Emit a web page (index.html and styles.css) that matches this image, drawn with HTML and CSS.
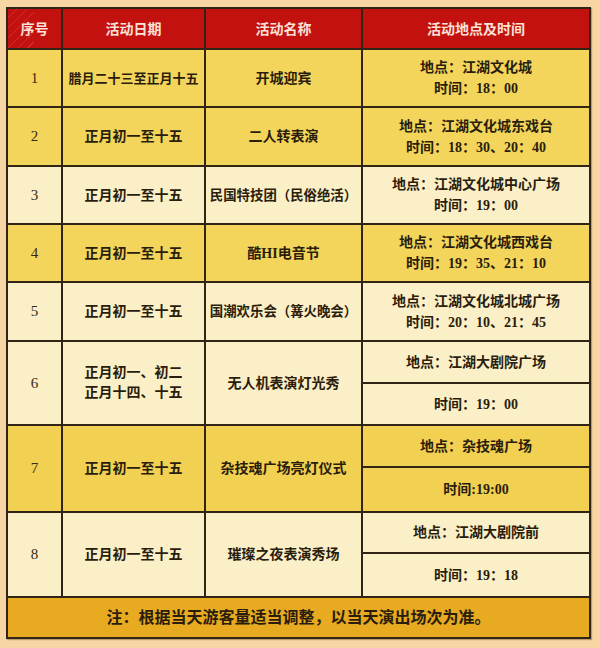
FILE: index.html
```html
<!DOCTYPE html>
<html lang="zh">
<head>
<meta charset="utf-8">
<title>活动安排</title>
<link rel="stylesheet" href="styles.css">
</head>
<body>
<div class="sheet">
  <div class="grid">
    <div class="c head">序号</div>
    <div class="c head">活动日期</div>
    <div class="c head">活动名称</div>
    <div class="c head">活动地点及时间</div>

    <div class="c y num">1</div>
    <div class="c y tight">腊月二十三至正月十五</div>
    <div class="c y">开城迎宾</div>
    <div class="c y"><span>地点：江湖文化城</span><span>时间：18：00</span></div>

    <div class="c y num">2</div>
    <div class="c y">正月初一至十五</div>
    <div class="c y">二人转表演</div>
    <div class="c y"><span>地点：江湖文化城东戏台</span><span>时间：18：30、20：40</span></div>

    <div class="c w num">3</div>
    <div class="c w">正月初一至十五</div>
    <div class="c w small">民国特技团（民俗绝活）</div>
    <div class="c w"><span>地点：江湖文化城中心广场</span><span>时间：19：00</span></div>

    <div class="c y num">4</div>
    <div class="c y">正月初一至十五</div>
    <div class="c y">酷HI电音节</div>
    <div class="c y"><span>地点：江湖文化城西戏台</span><span>时间：19：35、21：10</span></div>

    <div class="c w num">5</div>
    <div class="c w">正月初一至十五</div>
    <div class="c w small">国潮欢乐会（篝火晚会）</div>
    <div class="c w"><span>地点：江湖文化城北城广场</span><span>时间：20：10、21：45</span></div>

    <div class="c w num span2">6</div>
    <div class="c w span2 lines"><span>正月初一、初二</span><span>正月十四、十五</span></div>
    <div class="c w span2">无人机表演灯光秀</div>
    <div class="c w">地点：江湖大剧院广场</div>
    <div class="c w">时间：19：00</div>

    <div class="c y2 num span2">7</div>
    <div class="c y2 span2">正月初一至十五</div>
    <div class="c y2 span2">杂技魂广场亮灯仪式</div>
    <div class="c y2">地点：杂技魂广场</div>
    <div class="c y2">时间:19:00</div>

    <div class="c w num span2">8</div>
    <div class="c w span2">正月初一至十五</div>
    <div class="c w span2">璀璨之夜表演秀场</div>
    <div class="c w">地点：江湖大剧院前</div>
    <div class="c w">时间：19：18</div>

    <div class="c foot">注：根据当天游客量适当调整，以当天演出场次为准。</div>
  </div>
</div>
</body>
</html>
```

FILE: styles.css
```css
html, body {
  margin: 0;
  padding: 0;
}

body {
  width: 600px;
  height: 648px;
  background: #f8d5a4;
  font-family: "Liberation Serif", "Noto Sans CJK SC", serif;
  color: #2a1d0c;
  overflow: hidden;
}

.sheet {
  padding: 7px 9px 9px 6px;
}

.grid {
  width: 585px;
  height: 632px;
  box-sizing: border-box;
  display: grid;
  grid-template-columns: 53px 141px 155px 226px;
  grid-template-rows: 39px 56px 57px 56px 56px 57px 40px 40px 40px 43px 39px 42px 39px;
  gap: 2px;
  padding: 2px;
  background: #2f2415;
  box-shadow: 1px 1px 1px rgba(80, 50, 10, 0.35);
}

.c {
  display: flex;
  flex-direction: column;
  align-items: center;
  justify-content: center;
  text-align: center;
  font-size: 14px;
  font-weight: 700;
  line-height: 21px;
  white-space: nowrap;
}

.c span {
  display: block;
}

.lines {
  line-height: 20px;
}

.head {
  background: #c3110f;
  color: #fbe2d8;
  font-family: "Noto Sans CJK SC", sans-serif;
  font-size: 14px;
}

.head:first-child {
  background:
    repeating-linear-gradient(135deg, rgba(255, 170, 160, 0) 0 6px, rgba(255, 170, 160, 0.18) 6px 7px) left / 26px 100% no-repeat,
    #c3110f;
}

.y {
  background: #f4d55b;
}

.y2 {
  background: #f2d051;
}

.w {
  background: #fbefc7;
}

.num {
  font-weight: 400;
  font-size: 15px;
  color: #3a2a14;
}

.tight {
  font-size: 13px;
}

.small {
  font-size: 13.4px;
}

.span2 {
  grid-row: span 2;
}

.foot {
  grid-column: 1 / -1;
  background: #e7aa21;
  font-size: 16px;
}
```
